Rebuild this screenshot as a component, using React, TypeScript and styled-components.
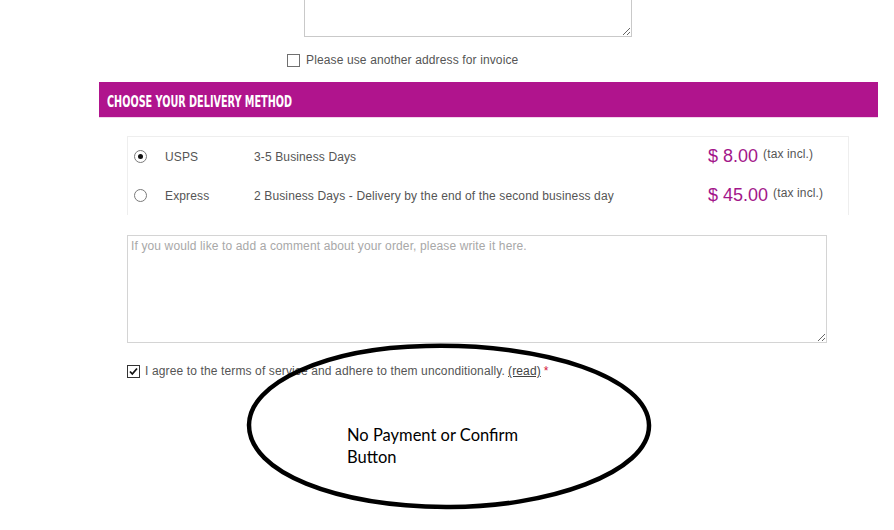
import React from "react";
import styled, { createGlobalStyle } from "styled-components";

const Global = createGlobalStyle`
  html, body { margin: 0; padding: 0; background: #fff; }
  body { font-family: "Liberation Sans", Arial, sans-serif; font-size: 12px; color: #555; overflow: hidden; letter-spacing: 0.13px; }
`;

const Screen = styled.div`
  position: relative;
  width: 894px;
  height: 530px;
  overflow: hidden;
`;

const Page = styled.div`
  width: 779px;
  margin-left: 99px;
  margin-top: -60px;
  display: flex;
  flex-direction: column;
`;

const AddressBlock = styled.div`
  display: flex;
  flex-direction: column;
  padding-left: 188px;
`;

const AddressArea = styled.textarea`
  box-sizing: border-box;
  margin: 0 0 0 17px;
  width: 328px;
  height: 97px;
  border: 1px solid #c9c9c9;
  resize: both;
  outline: none;
`;

const CheckRow = styled.label<{ $gap?: number }>`
  display: flex;
  align-items: center;
  gap: ${(p) => p.$gap ?? 6}px;
  height: 14px;
  line-height: 14px;
  color: #555;
  font-size: 12px;
`;

const Box = styled.span<{ $checked?: boolean }>`
  box-sizing: border-box;
  width: 13px;
  height: 13px;
  border: 1px solid ${(p) => (p.$checked ? "#333" : "#707070")};
  background: #fff;
  display: inline-flex;
  align-items: center;
  justify-content: center;
  flex: none;
`;

const InvoiceRow = styled(CheckRow)`
  margin-top: 16px;
`;

const Heading = styled.div`
  margin-top: 15px;
  height: 35px;
  background: #b0148d;
  border-bottom: 1px solid #f3d4ec;
  display: flex;
  align-items: center;
  padding-left: 8px;
`;

const HeadingText = styled.span`
  display: inline-block;
  font-family: "DejaVu Sans Condensed", "Liberation Sans", sans-serif;
  font-weight: bold;
  font-size: 16px;
  letter-spacing: 0;
  color: #fff;
  transform: scaleX(0.672);
  transform-origin: left center;
  white-space: nowrap;
  margin-top: 3px;
`;

const Body = styled.div`
  display: flex;
  flex-direction: column;
  padding-left: 28px;
`;

const Carriers = styled.div`
  margin-top: 18px;
  width: 722px;
  box-sizing: border-box;
  border: 1px solid #eeeeee;
  border-bottom: none;
  display: flex;
  flex-direction: column;
`;

const CarrierRow = styled.div`
  display: grid;
  grid-template-columns: 37px 89px 454px 1fr;
  align-items: center;
  height: 39px;
`;

const RadioCell = styled.div`
  padding-left: 6px;
  display: flex;
  align-items: center;
`;

const Radio = styled.span<{ $checked?: boolean }>`
  box-sizing: border-box;
  width: 13px;
  height: 13px;
  border-radius: 50%;
  border: 1px solid #7a7a7a;
  background: #fff;
  display: flex;
  align-items: center;
  justify-content: center;
  &::after {
    content: "";
    width: 5px;
    height: 5px;
    border-radius: 50%;
    background: ${(p) => (p.$checked ? "#111" : "transparent")};
  }
`;

const Cell = styled.div`
  color: #555;
  font-size: 12px;
  white-space: nowrap;
`;

const PriceCell = styled.div`
  display: flex;
  align-items: flex-start;
  gap: 5px;
  margin-top: -2px;
`;

const Price = styled.span`
  font-size: 18px;
  color: #a3168a;
  line-height: 20px;
  letter-spacing: 0;
`;

const Tax = styled.span`
  font-size: 12px;
  color: #555;
  line-height: 16px;
`;

const Comment = styled.textarea`
  box-sizing: border-box;
  margin: 20px 0 0 0;
  width: 700px;
  height: 108px;
  border: 1px solid #d4d4d4;
  padding: 3px 3px;
  font-family: "Liberation Sans", Arial, sans-serif;
  font-size: 12px;
  letter-spacing: 0.13px;
  color: #555;
  resize: both;
  outline: none;
  &::placeholder { color: #a8a8a8; }
`;

const TermsRow = styled(CheckRow)`
  margin-top: 21px;
`;

const ReadLink = styled.a`
  color: #444;
  text-decoration: underline;
  margin-left: 3px;
`;

const Star = styled.span`
  color: #d2173a;
  margin-left: 3px;
`;

const Annotation = styled.div`
  position: absolute;
  left: 246px;
  top: 343px;
  width: 406px;
  height: 167px;
`;

const Ellipse = styled.svg`
  position: absolute;
  inset: 0;
`;

const Note = styled.div`
  position: relative;
  padding: 81px 0 0 101px;
  font-family: Lato, "Open Sans", sans-serif;
  font-size: 16.5px;
  line-height: 22px;
  letter-spacing: 0;
  color: #000;
`;

const Check = () => (
  <svg width="11" height="11" viewBox="0 0 11 11">
    <path d="M2 5.5 L4.3 8 L9 2.5" fill="none" stroke="#111" strokeWidth="1.8" />
  </svg>
);

const carriers = [
  { name: "USPS", delay: "3-5 Business Days", price: "$ 8.00", checked: true },
  { name: "Express", delay: "2 Business Days - Delivery by the end of the second business day", price: "$ 45.00", checked: false },
];

export default function App() {
  return (
    <Screen>
      <Global />
      <Page>
        <AddressBlock>
          <AddressArea />
          <InvoiceRow>
            <Box />
            Please use another address for invoice
          </InvoiceRow>
        </AddressBlock>
        <Heading>
          <HeadingText>CHOOSE YOUR DELIVERY METHOD</HeadingText>
        </Heading>
        <Body>
          <Carriers>
            {carriers.map((c) => (
              <CarrierRow key={c.name}>
                <RadioCell>
                  <Radio $checked={c.checked} />
                </RadioCell>
                <Cell>{c.name}</Cell>
                <Cell>{c.delay}</Cell>
                <PriceCell>
                  <Price>{c.price}</Price>
                  <Tax>(tax incl.)</Tax>
                </PriceCell>
              </CarrierRow>
            ))}
          </Carriers>
          <Comment placeholder="If you would like to add a comment about your order, please write it here." />
          <TermsRow $gap={5}>
            <Box $checked>
              <Check />
            </Box>
            <span>
              I agree to the terms of service and adhere to them unconditionally.
              <ReadLink>(read)</ReadLink>
              <Star>*</Star>
            </span>
          </TermsRow>
        </Body>
      </Page>
      <Annotation>
        <Ellipse width="406" height="167" viewBox="0 0 406 167">
          <path
            d="M180 3 C 300 0, 402 35, 403 82 C 404 130, 300 165, 200 164 C 90 163, 3 130, 3 82 C 3 40, 80 5, 180 3 Z"
            fill="none"
            stroke="#000"
            strokeWidth="4.5"
          />
        </Ellipse>
        <Note>
          No Payment or Confirm
          <br />
          Button
        </Note>
      </Annotation>
    </Screen>
  );
}
